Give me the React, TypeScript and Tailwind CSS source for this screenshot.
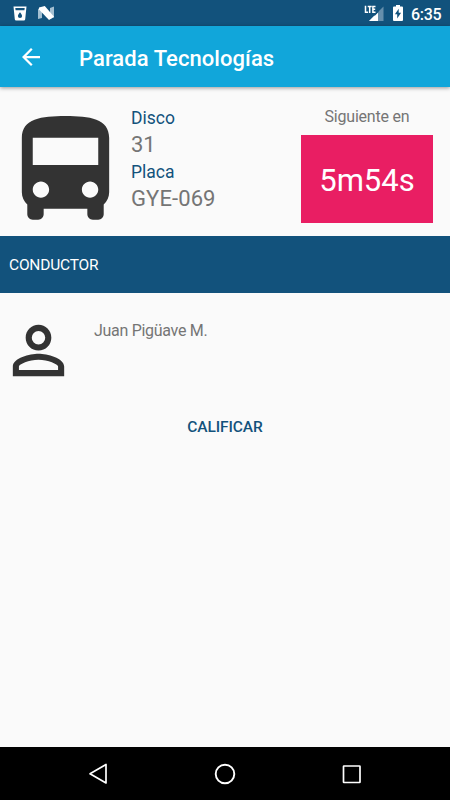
function StatusBar() {
  return (
    <div className="flex h-[26px] shrink-0 items-center bg-[#12527c] pl-[13px] pr-[9px] text-white">
      <svg className="mt-[1px] h-[15px] w-[14px]" viewBox="0 0 14 15">
        <path fillRule="evenodd" fill="#fff" d="M.5.5h13L12.2 13.2q-.1 1.3-1.4 1.3H3.2q-1.300 0-1.400-1.300zM2.300 2l.3 2.200h8.800l.3-2.200zM7 6.200C5.900 7.700 4.900 8.800 4.900 10a2.100 2.100 0 0 0 4.200 0C9.100 8.800 8.100 7.700 7 6.200z" />
      </svg>
      <svg className="ml-[11px] h-[14px] w-[17px]" viewBox="0 0 17 14">
        <path fill="#a3bfd1" d="M0 3L4 1v11L0 13zM12 2L16 .5v11l-4 1.500z" />
        <path fill="#fff" d="M1 1.500L6.800 0 16 10.800 11 14 1 3.500z" />
      </svg>
      <div className="grow" />
      <svg className="h-[17px] w-[20px]" viewBox="0 0 20 17">
        <path fill="#668fac" d="M19.500 1.500V16H5z" />
        <path fill="#fff" d="M14 7V16H5z" />
        <path fill="none" stroke="#12527c" strokeWidth="3" d="M1 9h9.500L13 6.500V0" />
        <path fill="none" stroke="#fff" strokeWidth="1.500" d="M1.500.8v6.400h2.600M3.700 1.500h4M5.700 1.500v6.400M11.500 1.500H8.900v5.700h2.600M8.900 4.300h2.300" />
      </svg>
      <svg className="ml-[9px] h-[16px] w-[10px]" viewBox="0 0 10 16">
        <path fillRule="evenodd" fill="#fff" d="M3 0h4v1.500h2q1 0 1 1V15q0 1-1 1H1q-1 0-1-1V2.500q0-1 1-1h2zM5.700 3.700L1.900 9.300h2.300v4.200L8.100 7.800H5.700z" />
      </svg>
      <span className="ml-[8px] w-[30px] whitespace-nowrap pt-[3px] text-[16px] font-medium leading-[18px] tracking-[-0.3px]">6:35</span>
    </div>
  );
}

function AppBar() {
  return (
    <header className="z-10 flex h-[61px] shrink-0 items-center bg-[#11a6da] pl-[22px] text-white shadow-[0_1px_4px_rgba(0,0,0,0.4)]">
      <svg className="h-[18px] w-[18px]" viewBox="4 4 16 16">
        <path fill="#fff" d="M20 11H7.830l5.590-5.590L12 4l-8 8 8 8 1.410-1.410L7.830 13H20v-2z" />
      </svg>
      <h1 className="ml-[39px] whitespace-nowrap pt-[4px] text-[22px] font-medium leading-[26px] tracking-[0.06px]">Parada Tecnologías</h1>
    </header>
  );
}

function BusSummary() {
  return (
    <section className="flex h-[149px] shrink-0">
      <svg className="mt-[18px] h-[131px] w-[131px] shrink-0" viewBox="0 0 24 24" fill="#333">
        <path d="M4 16c0 .88.39 1.670 1 2.220V20c0 .55.45 1 1 1h1c.55 0 1-.45 1-1v-1h8v1c0 .55.45 1 1 1h1c.55 0 1-.45 1-1v-1.780c.61-.55 1-1.340 1-2.220V6c0-3.500-3.580-4-8-4s-8 .5-8 4v10zm3.500 1c-.83 0-1.500-.67-1.500-1.500S6.670 14 7.500 14s1.500.67 1.500 1.500S8.330 17 7.500 17zm9 0c-.83 0-1.500-.67-1.500-1.500s.67-1.500 1.500-1.500 1.500.67 1.500 1.500-.67 1.500-1.500 1.500zm1.500-6H6V6h12v5z" />
      </svg>
      <div className="w-[170px] whitespace-nowrap pt-[18px] text-[#757575]">
        <p className="text-[17.500px] leading-[26px] text-[#12527c]">Disco</p>
        <p className="text-[22px] leading-[28px]">31</p>
        <p className="text-[17.500px] leading-[26px] text-[#12527c]">Placa</p>
        <p className="text-[22px] leading-[28px] tracking-[0.1px]">GYE-069</p>
      </div>
      <div className="w-[132px] pt-[20px] text-center">
        <p className="h-[28px] text-[16px] leading-[20px] tracking-[-0.2px] text-[#757575]">Siguiente en</p>
        <div className="flex h-[88px] w-[132px] items-center justify-center bg-[#e91e63] pt-[5px] text-[31px] text-white">5m54s</div>
      </div>
    </section>
  );
}

export default function App() {
  return (
    <div className="flex h-[800px] w-[450px] flex-col overflow-hidden bg-[#fafafa] font-['Roboto',sans-serif]">
      <StatusBar />
      <AppBar />
      <main className="flex grow flex-col">
        <BusSummary />
        <h2 className="flex h-[57px] shrink-0 items-center bg-[#12527c] pl-[9px] pt-[2px] text-[15.500px] tracking-[-0.200px] text-white">CONDUCTOR</h2>
        <section className="flex h-[96px] pt-[19px]">
          <svg className="h-[77px] w-[77px] shrink-0" viewBox="0 0 24 24" fill="#333">
            <path d="M12 5.900a2.100 2.100 0 1 1 0 4.200 2.100 2.100 0 0 1 0-4.200m0 9c2.970 0 6.100 1.460 6.100 2.100v1.100H5.900V17c0-.64 3.130-2.100 6.100-2.100M12 4C9.790 4 8 5.790 8 8s1.790 4 4 4 4-1.790 4-4-1.790-4-4-4zm0 9c-2.670 0-8 1.340-8 4v3h16v-3c0-2.660-5.330-4-8-4z" />
          </svg>
          <p className="ml-[17px] pt-[9px] text-[16px] leading-[20px] tracking-[-0.300px] text-[#757575]">Juan Pigüave M.</p>
        </section>
        <button className="mt-[14px] h-[50px] self-center text-[15.500px] font-medium tracking-[-0.100px] text-[#12527c]">CALIFICAR</button>
      </main>
      <nav className="flex h-[53px] shrink-0 items-center justify-between bg-black pl-[88px] pr-[88px]">
        <svg className="h-[22px] w-[20px]" viewBox="0 0 20 22"><path d="M18 1.500v18.500L2 10.800z" fill="none" stroke="#fff" strokeWidth="1.700" strokeLinejoin="round" /></svg>
        <svg className="h-[22px] w-[22px]" viewBox="0 0 22 22"><circle cx="11" cy="11" r="9.300" fill="none" stroke="#fff" strokeWidth="1.900" /></svg>
        <svg className="h-[20px] w-[20px]" viewBox="0 0 20 20"><rect x="1.500" y="2" width="16.500" height="16.500" rx=".5" fill="none" stroke="#fff" strokeWidth="1.700" /></svg>
      </nav>
    </div>
  );
}
